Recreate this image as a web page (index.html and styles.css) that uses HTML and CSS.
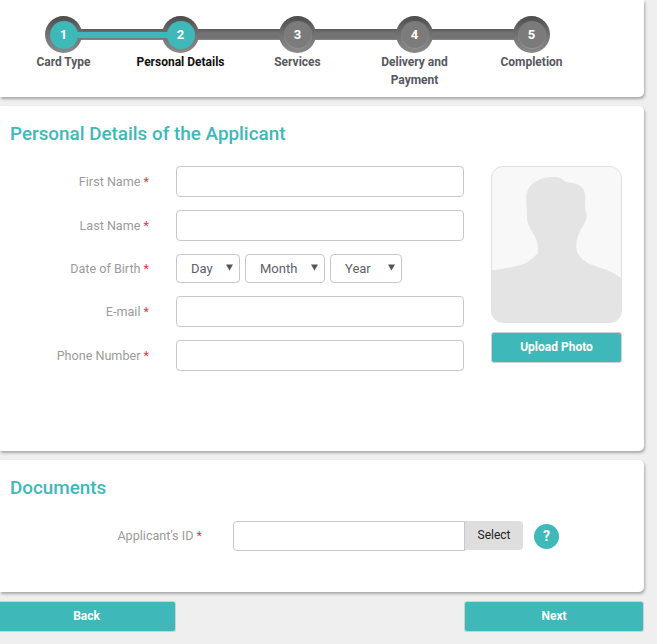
FILE: index.html
```html
<!DOCTYPE html>
<html lang="en">
<head>
<meta charset="utf-8">
<title>Personal Details</title>
<link rel="stylesheet" href="styles.css">
</head>
<body>
<div class="page">
  <section class="card card-steps">
    <ol class="steps">
      <li class="step done"><span class="dot"><span class="num">1</span></span><span class="step-label">Card Type</span></li>
      <li class="step current"><span class="dot"><span class="num">2</span></span><span class="step-label">Personal Details</span></li>
      <li class="step"><span class="dot"><span class="num">3</span></span><span class="step-label">Services</span></li>
      <li class="step"><span class="dot"><span class="num">4</span></span><span class="step-label">Delivery and Payment</span></li>
      <li class="step"><span class="dot"><span class="num">5</span></span><span class="step-label">Completion</span></li>
    </ol>
  </section>

  <section class="card card-personal">
    <h2 class="title">Personal Details of the Applicant</h2>
    <div class="personal-body">
      <div class="fields">
        <div class="row"><label class="lbl">First Name <b class="req">*</b></label><input class="input" type="text"></div>
        <div class="row"><label class="lbl">Last Name <b class="req">*</b></label><input class="input" type="text"></div>
        <div class="row row-date"><label class="lbl">Date of Birth <b class="req">*</b></label>
          <div class="date">
            <div class="sel sel-day">Day<svg class="arrow" viewBox="0 0 7 7"><path d="M0 0.5h7L3.5 6.5z"/></svg></div>
            <div class="sel sel-month">Month<svg class="arrow" viewBox="0 0 7 7"><path d="M0 0.5h7L3.5 6.5z"/></svg></div>
            <div class="sel sel-year">Year<svg class="arrow" viewBox="0 0 7 7"><path d="M0 0.5h7L3.5 6.5z"/></svg></div>
          </div>
        </div>
        <div class="row"><label class="lbl">E-mail <b class="req">*</b></label><input class="input" type="text"></div>
        <div class="row"><label class="lbl">Phone Number <b class="req">*</b></label><input class="input" type="text"></div>
      </div>
      <div class="photo-col">
        <div class="photo">
          <svg viewBox="0 0 130 156" class="silhouette" preserveAspectRatio="none">
            <path d="M0 104 C14 102 27 100 35 96 C40 93 43 90 46 87 C47 82 46 78 45 74 C43 68 39 64 37 59 C35 54 35 50 35 46 C35 38 34 32 35 27 C37 19 41 16 45 14 C52 10 58 10 65 10 C70 10 72 14 75 15 C81 16 85 16 89 19 C93 22 94 26 94 31 L94 44 C96 47 96 49 95 52 C94 56 92 59 90 62 C88 67 85 72 85 77 C85 81 85 84 86 86 C89 91 92 94 97 97 C108 101 123 105 130 112 L130 156 L0 156 Z"/>
          </svg>
        </div>
        <button class="btn btn-upload" type="button">Upload Photo</button>
      </div>
    </div>
  </section>

  <section class="card card-docs">
    <h2 class="title">Documents</h2>
    <div class="doc-row">
      <label class="lbl lbl-doc">Applicant's ID <b class="req">*</b></label>
      <div class="file"><input class="file-input" type="text"><span class="file-btn">Select</span></div>
      <span class="help">?</span>
    </div>
  </section>

  <div class="actions">
    <button class="btn btn-nav btn-back" type="button">Back</button>
    <button class="btn btn-nav btn-next" type="button">Next</button>
  </div>
</div>
</body>
</html>
```
FILE: styles.css
```css
* { box-sizing: border-box; }
html, body { margin: 0; height: 100%; }
body {
  background: #efefef;
  font-family: Roboto, "Liberation Sans", sans-serif;
  font-size: 13px;
  overflow: hidden;
}
.page { width: 644px; height: 644px; display: flex; flex-direction: column; gap: 9px; }
.card {
  background: #fff;
  border-radius: 0 5px 5px 0;
  box-shadow: 1px 2px 3px rgba(0, 0, 0, .3);
  flex: none;
}
.card-steps { height: 97px; padding: 16px 0 0 5px; border-top-right-radius: 0; }
.steps { display: flex; list-style: none; margin: 0; padding: 0; }
.step {
  width: 117px;
  display: flex;
  flex-direction: column;
  align-items: center;
  position: relative;
}
.step + .step::before {
  content: "";
  position: absolute;
  top: 13px;
  left: -58.5px;
  width: 117px;
  height: 11px;
  background: linear-gradient(#5b5b5b, #747474 40%, #707070 80%, #8a8a8a);
}
.step.current::after {
  content: "";
  position: absolute;
  top: 16px;
  left: -50px;
  width: 100px;
  height: 6px;
  background: #3eb8b8;
  z-index: 2;
}
.dot {
  width: 37px;
  height: 37px;
  border-radius: 50%;
  background: linear-gradient(#4c4c4c, #757575 55%, #8a8a8a);
  position: relative;
  z-index: 1;
  display: flex;
  align-items: center;
  justify-content: center;
}
.num {
  width: 28px;
  height: 28px;
  border-radius: 50%;
  background: #7b7b7b;
  box-shadow: inset 0 -1px 1px #959595;
  color: #fff;
  font-weight: 700;
  font-size: 13px;
  line-height: 27px;
  text-align: center;
}
.done .num, .current .num { background: #3eb8b8; box-shadow: none; }
.step-label {
  width: 100px;
  text-align: center;
  font-size: 12px;
  font-weight: 700;
  line-height: 18px;
  color: #58585f;
}
.current .step-label { color: #111; width: 117px; }
.title {
  margin: 0;
  color: #3eb8b8;
  font-size: 18.85px;
  font-weight: 500;
  line-height: 24px;
  padding-left: 10px;
}
.card-personal { height: 345px; padding-top: 16px; }
.personal-body { display: flex; margin-top: 20px; }
.fields { width: 464px; display: flex; flex-direction: column; gap: 13px; }
.row { display: flex; align-items: center; height: 31px; }
.row-date { height: 29px; }
.lbl {
  width: 149px;
  text-align: right;
  color: #9b9b9b;
  font-size: 12.6px;
  flex: none;
}
.req { color: #f0334f; font-weight: 400; }
.input {
  width: 288px;
  height: 31px;
  margin-left: 27px;
  border: 1px solid #c8c8c8;
  border-radius: 4px;
  background: #fff;
  padding: 0 8px;
}
.date { display: flex; gap: 5px; margin-left: 27px; }
.sel {
  height: 29px;
  border: 1px solid #c8c8c8;
  border-radius: 4px;
  color: #5f5f68;
  font-size: 13px;
  line-height: 27px;
  padding-left: 14px;
  position: relative;
}
.sel-day { width: 64px; }
.sel-month { width: 80px; }
.sel-year { width: 72px; }
.arrow { position: absolute; right: 6px; top: 9px; width: 7px; height: 7px; fill: #555; }
.photo-col { margin-left: 27px; width: 131px; display: flex; flex-direction: column; gap: 9px; }
.photo {
  height: 157px;
  border: 1px solid #e0e0e0;
  border-radius: 12px;
  background: #f8f8f8;
  overflow: hidden;
}
.silhouette { display: block; width: 100%; height: 100%; fill: #e4e4e4; }
.btn {
  background: #3eb8b8;
  color: #fff;
  border: 1px solid #d0d0d0;
  border-radius: 3px;
  font-family: inherit;
  font-weight: 700;
  font-size: 12px;
  padding: 0 0 2px;
}
.btn-upload { height: 31px; }
.card-docs { height: 132px; padding-top: 16px; }
.doc-row { display: flex; align-items: center; margin-top: 21px; }
.lbl-doc { width: 202px; padding-bottom: 1px; }
.file { display: flex; margin-left: 31px; }
.file-input {
  width: 232px;
  height: 30px;
  border: 1px solid #c8c8c8;
  border-radius: 4px 0 0 4px;
  background: #fff;
  padding: 0 8px;
}
.file-btn {
  width: 58px;
  height: 29px;
  background: #dedede;
  border-radius: 0 4px 4px 0;
  color: #222;
  font-size: 12px;
  line-height: 29px;
  text-align: center;
}
.help {
  width: 25px;
  height: 25px;
  margin-left: 11px;
  border-radius: 50%;
  background: #3eb8b8;
  color: #fff;
  font-weight: 700;
  font-size: 14px;
  line-height: 25px;
  text-align: center;
}
.actions { display: flex; justify-content: space-between; }
.btn-nav { height: 31px; }
.btn-back { width: 176px; border-left: 0; border-radius: 0 3px 3px 0; padding-right: 2px; }
.btn-next { width: 180px; }
```
